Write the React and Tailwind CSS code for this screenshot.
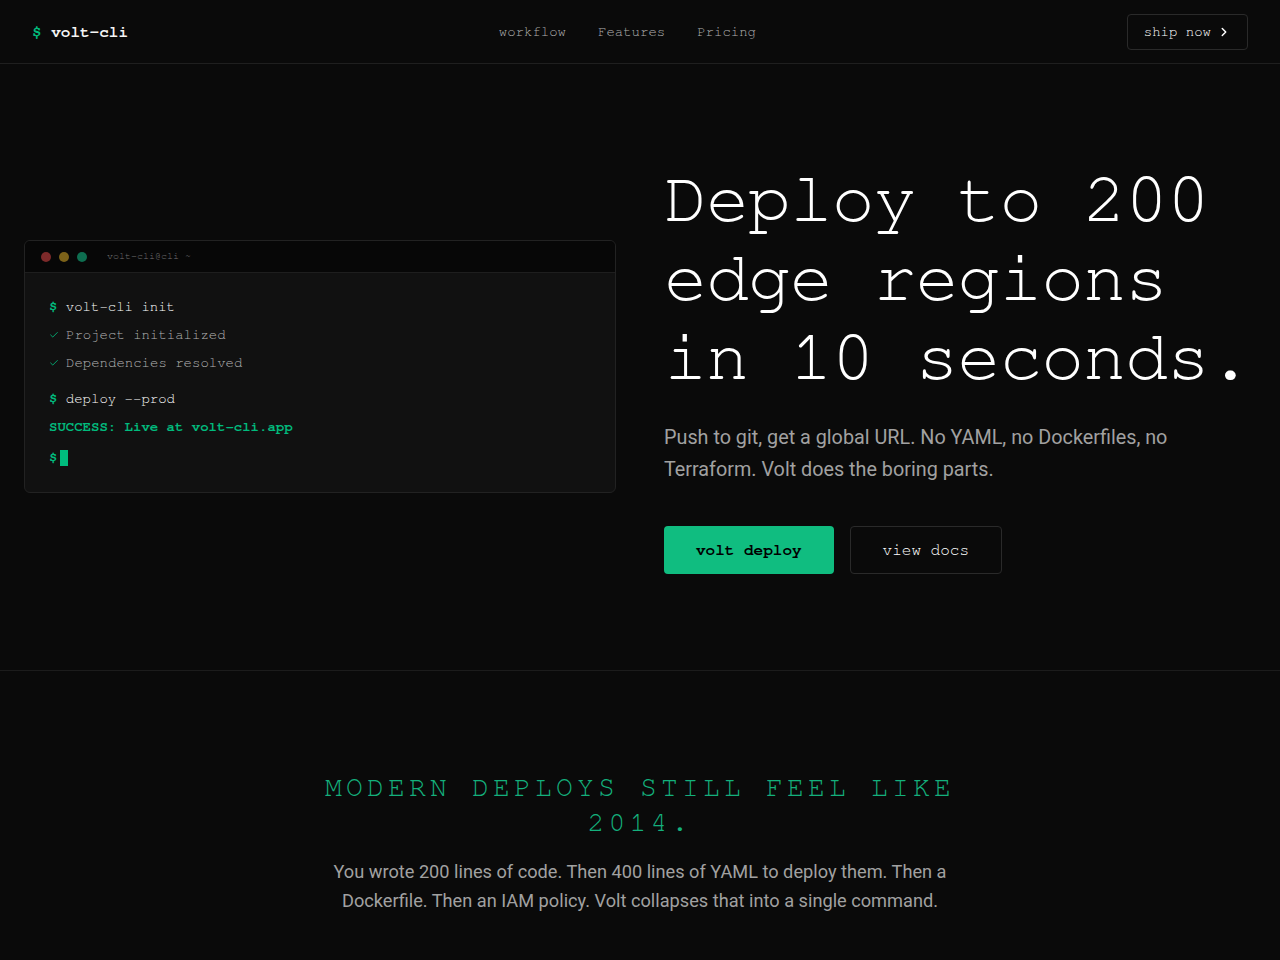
import { ChevronRight, Check } from "lucide-react";

const NAV_LINKS = ["workflow", "Features", "Pricing"];

function Navbar() {
  return (
    <header className="h-16 border-b border-[#1f1f1f] px-8 flex items-center justify-between font-['FreeMono',monospace]">
      <div className="text-base font-bold text-neutral-100">
        <span className="text-emerald-500">$</span> volt-cli
      </div>
      <nav className="flex items-center gap-8 text-sm text-[#b0b0b0]">
        {NAV_LINKS.map((link) => (
          <a key={link} href="#" className="hover:text-neutral-200">
            {link}
          </a>
        ))}
      </nav>
      <button
        type="button"
        className="h-9 px-4 flex items-center gap-1.5 rounded border border-[#2a2a2a] text-sm text-white"
      >
        ship now
        <ChevronRight size={14} strokeWidth={2.5} />
      </button>
    </header>
  );
}

const Prompt = ({ children }) => (
  <div className="leading-5 text-white">
    <span className="text-emerald-500 font-bold">$</span> {children}
  </div>
);

const Done = ({ children }) => (
  <div className="leading-5 text-[#b3b3b3] flex items-center">
    <span className="w-[17px] shrink-0 text-emerald-500">
      <Check size={10} strokeWidth={2} />
    </span>
    {children}
  </div>
);

function Terminal() {
  return (
    <div className="rounded-md border border-[#222] bg-[#111111] overflow-hidden font-['FreeMono',monospace]">
      <div className="h-8 px-4 flex items-center bg-[#070707] border-b border-[#1e1e1e]">
        <div className="flex items-center gap-2">
          <span className="w-2.5 h-2.5 rounded-full bg-[#7d2a2a]" />
          <span className="w-2.5 h-2.5 rounded-full bg-[#7c6219]" />
          <span className="w-2.5 h-2.5 rounded-full bg-[#0e6e50]" />
        </div>
        <span className="ml-5 text-[10px] text-neutral-500">volt-cli@cli ~</span>
      </div>
      <div className="px-6 pt-6 pb-6 text-sm">
        <div className="flex flex-col gap-2">
          <Prompt>volt-cli init</Prompt>
          <Done>Project initialized</Done>
          <Done>Dependencies resolved</Done>
        </div>
        <div className="flex flex-col gap-2 mt-4">
          <Prompt>deploy --prod</Prompt>
          <div className="leading-5 font-bold text-emerald-500">SUCCESS: Live at volt-cli.app</div>
        </div>
        <div className="mt-[11px] leading-5 flex items-center gap-[3px]">
          <span className="text-emerald-500 font-bold">$</span>
          <span className="w-2 h-4 bg-emerald-500" />
        </div>
      </div>
    </div>
  );
}

function Hero() {
  return (
    <section className="px-6 py-24 grid grid-cols-2 gap-12 items-center border-b border-[#1c1c1c]">
      <Terminal />
      <div>
        <h1 className="text-[72px] leading-[1.1] tracking-[-1.3px] text-white font-['FreeMono',monospace]">
          Deploy to 200 edge regions in 10 seconds.
        </h1>
        <p className="mt-6 max-w-xl text-[19.8px] leading-8 text-neutral-400 font-['Roboto',sans-serif]">
          Push to git, get a global URL. No YAML, no Dockerfiles, no Terraform. Volt does the boring parts.
        </p>
        <div className="mt-10 flex items-center gap-4 font-['FreeMono',monospace]">
          <button
            type="button"
            className="h-12 px-8 rounded bg-[#10bd80] text-base font-bold text-black"
          >
            volt deploy
          </button>
          <button
            type="button"
            className="h-12 px-8 rounded border border-[#2a2a2a] text-base text-white"
          >
            view docs
          </button>
        </div>
      </div>
    </section>
  );
}

function Problem() {
  return (
    <section className="px-6 pt-[100px] pb-16 flex flex-col items-center text-center">
      <h2 className="max-w-2xl text-[28px] leading-[35px] tracking-[0.15em] text-[#14b07c] font-['FreeMono',monospace]">
        MODERN DEPLOYS STILL FEEL LIKE 2014.
      </h2>
      <p className="mt-4 max-w-2xl text-[18.2px] leading-[29px] text-neutral-400 font-['Roboto',sans-serif]">
        You wrote 200 lines of code. Then 400 lines of YAML to deploy them. Then a Dockerfile. Then an IAM
        policy. Volt collapses that into a single command.
      </p>
    </section>
  );
}

export default function App() {
  return (
    <div className="min-h-screen bg-[#0a0a0a] text-neutral-100">
      <Navbar />
      <Hero />
      <Problem />
    </div>
  );
}
